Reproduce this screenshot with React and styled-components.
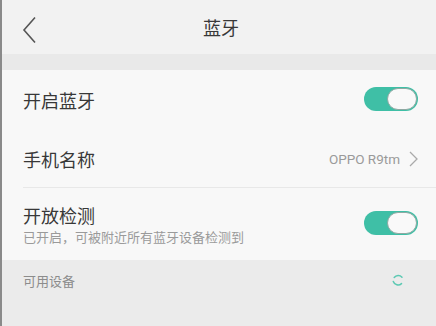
import React from 'react'
import styled, {createGlobalStyle} from 'styled-components'

const Global = createGlobalStyle`
    html, body {
        margin: 0;
        padding: 0;
        background: #ebebeb;
        font-family: "Noto Sans CJK SC", "Noto Sans", sans-serif;
    }
`

const Page = styled.div`
    width: 436px;
    height: 326px;
    display: flex;
    flex-direction: column;
    background: #ebebeb;
    border-left: 2px solid #8a8a8a;
    box-sizing: border-box;
    overflow: hidden;
`

const Header = styled.header`
    height: 54px;
    display: flex;
    align-items: center;
    justify-content: center;
    position: relative;
    background: #f2f2f2;
`

const Back = styled.button`
    position: absolute;
    left: 19px;
    top: 16px;
    border: 0;
    padding: 0;
    background: none;
    display: flex;
`

const Title = styled.h1`
    margin: 0;
    font-size: 18px;
    font-weight: 400;
    color: #383838;
    transform: translateX(2px);
`

const Band = styled.div`
    height: 16px;
    background: #e9e9e9;
`

const Section = styled.section`
    background: #f8f8f8;
    display: flex;
    flex-direction: column;
    padding: 0 0 0 21px;
`

const Row = styled.div`
    height: ${p => p.h}px;
    display: flex;
    align-items: center;
    justify-content: space-between;
    padding-right: 18px;
    border-bottom: ${p => p.line ? '1px solid #e8e8e8' : 'none'};
    box-sizing: border-box;
`

const Labels = styled.div`
    display: flex;
    flex-direction: column;
    gap: 3px;
`

const Label = styled.span`
    font-size: 18px;
    color: #383838;
    line-height: 22px;
`

const Sub = styled.span`
    font-size: 13px;
    color: #9a9a9a;
    line-height: 16px;
`

const Value = styled.span`
    display: flex;
    align-items: center;
    gap: 9px;
    font-family: "Roboto", "Noto Sans", sans-serif;
    font-size: 13.5px;
    color: #9a9a9a;
`

const Track = styled.div`
    width: 54px;
    height: 24px;
    border-radius: 12px;
    background: #3fbfa6;
    display: flex;
    justify-content: flex-end;
    align-items: center;
    padding: 0 1px;
    box-sizing: border-box;
    margin-top: ${p => p.mt || 0}px;
`

const Knob = styled.div`
    width: 30px;
    height: 22px;
    border-radius: 11px;
    background: #f9f9f9;
    border: 1.5px solid #8fa9a3;
    box-sizing: border-box;
`

const Available = styled.div`
    height: 40px;
    display: flex;
    align-items: center;
    justify-content: space-between;
    padding: 0 32px 0 21px;
    font-size: 13px;
    color: #8c8c8c;
`

const Toggle = ({mt}) => (
    <Track mt={mt}>
        <Knob/>
    </Track>
)

const App = () => {
    return (
        <Page>
            <Global/>
            <Header>
                <Back>
                    <svg width="16" height="28" viewBox="0 0 16 28">
                        <path d="M14 1.5 L3 14 L14 26.5" fill="none" stroke="#555" strokeWidth="1.6"/>
                    </svg>
                </Back>
                <Title>蓝牙</Title>
            </Header>

            <Band/>

            <Section>
                <Row h={60}>
                    <Label>开启蓝牙</Label>
                    <Toggle mt={-2}/>
                </Row>
                <Row h={58} line>
                    <Label>手机名称</Label>
                    <Value>
                        OPPO R9tm
                        <svg width="9" height="16" viewBox="0 0 9 16">
                            <path d="M1 1 L8 8 L1 15" fill="none" stroke="#aaa" strokeWidth="1.3"/>
                        </svg>
                    </Value>
                </Row>
                <Row h={72}>
                    <Labels>
                        <Label>开放检测</Label>
                        <Sub>已开启，可被附近所有蓝牙设备检测到</Sub>
                    </Labels>
                    <Toggle mt={-2}/>
                </Row>
            </Section>

            <Available>
                可用设备
                <svg width="12" height="12" viewBox="0 0 12 12">
                    <path d="M10 3.2 A5 5 0 0 0 2.2 3.5" fill="none" stroke="#5cc9b3" strokeWidth="1.5" strokeLinecap="round"/>
                    <path d="M1.3 7.5 A5 5 0 0 0 9.5 9.6" fill="none" stroke="#5cc9b3" strokeWidth="1.5" strokeLinecap="round"/>
                </svg>
            </Available>
        </Page>
    )
}

export default App
